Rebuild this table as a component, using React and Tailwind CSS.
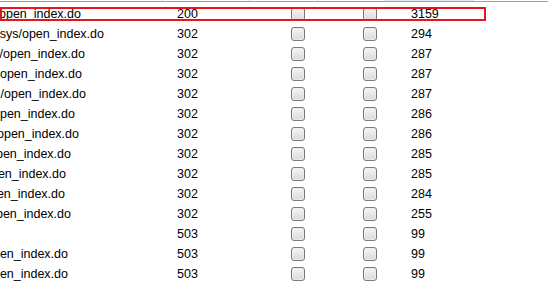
const rows = [
  { path: "/login/open_index.do", end: "w-[81px]", status: "200", size: "3159" },
  { path: "/portal/sys/open_index.do", end: "w-[104px]", status: "302", size: "294" },
  { path: "/admin/open_index.do", end: "w-[85px]", status: "302", size: "287" },
  { path: "/webopen_index.do", end: "w-[82px]", status: "302", size: "287" },
  { path: "/admin/open_index.do", end: "w-[86px]", status: "302", size: "287" },
  { path: "/main/open_index.do", end: "w-[75px]", status: "302", size: "286" },
  { path: "/main/open_index.do", end: "w-[79px]", status: "302", size: "286" },
  { path: "/main/open_index.do", end: "w-[71px]", status: "302", size: "285" },
  { path: "/main/open_index.do", end: "w-[66px]", status: "302", size: "285" },
  { path: "/main/open_index.do", end: "w-[65px]", status: "302", size: "284" },
  { path: "/main/open_index.do", end: "w-[71px]", status: "302", size: "255" },
  { path: "", end: "w-[68px]", status: "503", size: "99" },
  { path: "/main/open_index.do", end: "w-[68px]", status: "503", size: "99" },
  { path: "/main/open_index.do", end: "w-[68px]", status: "503", size: "99" },
];

const Box = () => (
  <span className="block w-[14px] h-[14px] rounded-[3px] border border-[#7a7a7a] bg-gradient-to-b from-[#f7f7f7] to-[#d9d9d9] shadow-[inset_0_0_0_1px_#ececec]" />
);

export default function App() {
  return (
    <div
      className="relative w-[548px] h-[281px] bg-white overflow-hidden text-[12.5px] text-black"
      style={{ fontFamily: '"Liberation Sans", Arial, sans-serif' }}
    >
      {/* header strip, scrolled mostly out of view */}
      <div className="grid grid-cols-[163px_87px_68px_68px_87px_1fr] h-[2px] border-b border-[#a0a0a0]">
        <div className="border-r border-[#d5d5d5]" />
        <div className="border-r border-[#d5d5d5]" />
        <div className="border-r border-[#d5d5d5]" />
        <div className="border-r border-[#d5d5d5]" />
        <div className="bg-[#dfeaf7] border-r border-[#d5d5d5]" />
        <div />
      </div>

      <div className="pt-[2px]">
        {rows.map((r, i) => (
          <div
            key={i}
            className="grid grid-cols-[163px_87px_68px_68px_1fr] h-[20px] leading-[20px] items-center"
          >
            <div className="overflow-hidden h-[20px]">
              <div className={`${r.end} flex justify-end overflow-hidden whitespace-nowrap`}>
                <span>{r.path}</span>
              </div>
            </div>
            <div className="pl-[14px]">{r.status}</div>
            <div className="pl-[41px]">
              <Box />
            </div>
            <div className="pl-[45px]">
              <Box />
            </div>
            <div className="pl-[25px]">{r.size}</div>
          </div>
        ))}
      </div>

      {/* selection highlight drawn over the first row */}
      <div className="absolute left-0 top-[7px] w-[486px] h-[14px] border-2 border-[#e8141c] pointer-events-none" />
    </div>
  );
}
